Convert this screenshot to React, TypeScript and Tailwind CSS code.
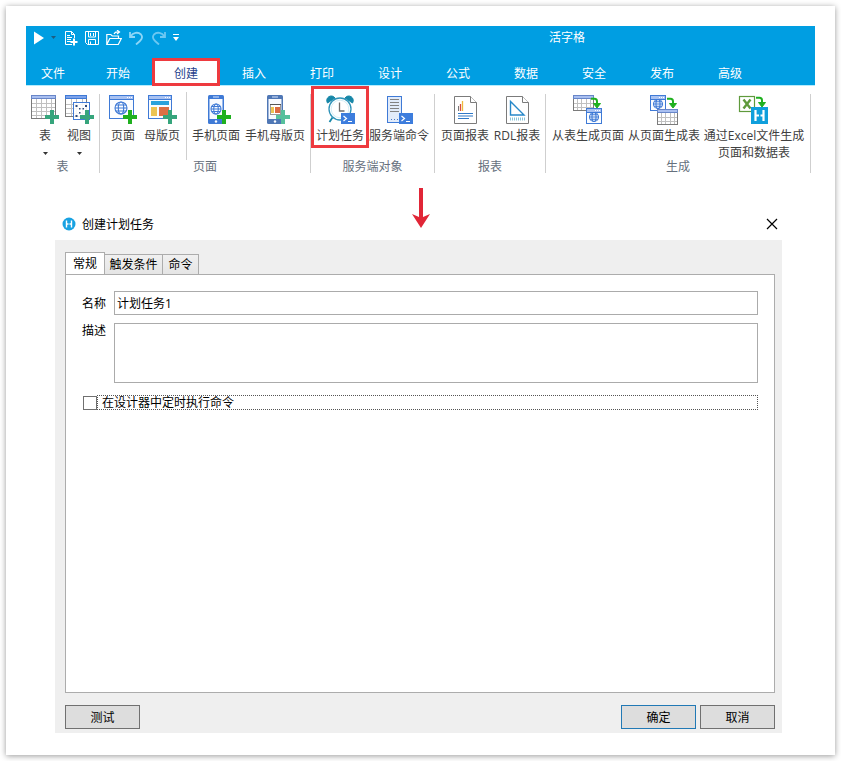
import { useState, type ReactNode } from 'react';

const GREEN = '#1fb01f';
const TEAL = '#36a57c';
const MINT = '#57c09c';
const BLUE = '#3f7ad6';

function Icon({ children }: { children: ReactNode }) {
  return (
    <svg viewBox="0 0 32 32" className="size-8 shrink-0" fill="none" aria-hidden="true">
      {children}
    </svg>
  );
}

function Plus({ x, y = 16, color }: { x: number; y?: number; color: string }) {
  return (
    <path
      d={`M${x + 5} ${y}h4v5h5v4h-5v5h-4v-5h-5v-4h5z`}
      fill={color}
    />
  );
}

function Globe({ x, y, r }: { x: number; y: number; r: number }) {
  return (
    <g stroke={BLUE} strokeWidth="1.1" fill="none">
      <circle cx={x} cy={y} r={r} />
      <ellipse cx={x} cy={y} rx={r * 0.45} ry={r} />
      <path d={`M${x - r} ${y}h${2 * r}M${x - r * 0.85} ${y - r * 0.5}h${r * 1.7}M${x - r * 0.85} ${y + r * 0.5}h${r * 1.7}`} />
    </g>
  );
}

function Sheet({ x, y, w, h, cols, rows }: { x: number; y: number; w: number; h: number; cols: number; rows: number }) {
  const body = h - 4;
  const lines: string[] = [];
  for (let i = 1; i < cols; i++) lines.push(`M${Math.round(x + (w * i) / cols) + 0.5} ${y + 4}v${body}`);
  for (let i = 1; i < rows; i++) lines.push(`M${x} ${Math.round(y + 4 + (body * i) / rows) + 0.5}h${w}`);
  return (
    <g>
      <rect x={x + 0.5} y={y + 0.5} width={w - 1} height={h - 1} fill="#fff" stroke="#7b7b7b" />
      <path d={lines.join('')} stroke="#c0c0c0" />
      <rect x={x + 0.5} y={y + 0.5} width={w - 1} height="3" fill="#a9bff0" stroke="#6886c8" />
      <path d={`M${x + 0.5} ${y + 4}v${body}M${x + w - 0.5} ${y + 4}v${body}M${x} ${y + h - 0.5}h${w}`} stroke="#7b7b7b" />
    </g>
  );
}

function BrowserFrame({ x, y, w, h }: { x: number; y: number; w: number; h: number }) {
  return (
    <g>
      <rect x={x + 0.5} y={y + 0.5} width={w - 1} height={h - 1} fill="#fbfdff" stroke={BLUE} />
      <rect x={x + 1} y={y + 1} width={w - 2} height="3" fill="#a9c2f2" />
      <path d={`M${x} ${y + 4.5}h${w}`} stroke={BLUE} />
      <path d={`M${x + w - 7} ${y + 2.5}h5`} stroke="#fff" strokeDasharray="1 1" />
    </g>
  );
}

function Phone({ color }: { color: string }) {
  return (
    <g>
      <rect x="8" y="1" width="16" height="29" rx="1.5" fill={color} />
      <rect x="9.5" y="5" width="13" height="20" fill="#f7faff" />
      <path d="M13 3h6" stroke="#dce8ff" />
      <circle cx="16" cy="27.5" r="1.2" fill="#fff" />
    </g>
  );
}

function Terminal({ x, y }: { x: number; y: number }) {
  return (
    <g>
      <rect x={x} y={y} width="14" height="11" fill="#3d7ddd" />
      <path d={`M${x + 2.5} ${y + 3}l3 2.5l-3 2.5M${x + 7} ${y + 8.5}h4`} stroke="#fff" strokeWidth="1.2" />
    </g>
  );
}

function TurnArrow({ x, y }: { x: number; y: number }) {
  return (
    <g>
      <path d={`M${x} ${y + 0.8}h3.5q2.5 0 2.5 2.5v4`} stroke={GREEN} strokeWidth="2" />
      <path d={`M${x + 2.5} ${y + 5.5}l3.5 4.5l3.5 -4.5z`} fill={GREEN} stroke={GREEN} />
    </g>
  );
}

function PaperOutline() {
  return (
    <g stroke="#7b7b7b" fill="#fff">
      <path d="M5.5 2.5h16l6 6v21h-22z" />
      <path d="M21.5 2.5v6h6" />
    </g>
  );
}

const tableIcon = (
  <Icon>
    <Sheet x={2} y={1} w={25} h={24} cols={5} rows={5} />
    <Plus x={16} color={TEAL} />
  </Icon>
);

const viewIcon = (
  <Icon>
    <Sheet x={2} y={1} w={22} h={22} cols={4} rows={4} />
    <rect x="2.5" y="1.5" width="21" height="3" fill="#7ea3ea" stroke={BLUE} />
    <rect x="10.5" y="8.5" width="16" height="17" fill="#fff" fillOpacity="0.85" stroke={BLUE} />
    <path d="M12.5 11h2v2h-2zM22 11h2v2h-2zM16 14h1.5v1.5h-1.5zM19.5 14h1.5v1.5h-1.5zM12.5 21h2v2h-2zM16 18h1.5v1.5h-1.5z" fill="#2e4a7c" />
    <Plus x={17} color={TEAL} />
  </Icon>
);

const pageIcon = (
  <Icon>
    <BrowserFrame x={2} y={1} w={25} h={24} />
    <Globe x={14} y={14} r={6} />
    <Plus x={16} color={GREEN} />
  </Icon>
);

const masterIcon = (
  <Icon>
    <BrowserFrame x={2} y={1} w={24} h={24} />
    <rect x="5" y="7" width="18" height="4" fill="#2ba3dc" />
    <rect x="5" y="13" width="6" height="9" fill="#ecc453" />
    <rect x="13" y="13" width="10" height="9" fill="#dc7046" />
    <Plus x={17} color={TEAL} />
  </Icon>
);

const phonePageIcon = (
  <Icon>
    <Phone color={BLUE} />
    <Globe x={16} y={15} r={5} />
    <Plus x={17} color={GREEN} />
  </Icon>
);

const phoneMasterIcon = (
  <Icon>
    <Phone color="#4f77b5" />
    <rect x="11.5" y="10.5" width="10" height="10" fill="#fff" stroke="#9a9a9a" />
    <path d="M11 10.5h11" stroke="#555" />
    <rect x="12" y="13" width="3" height="6" fill="#ecc453" />
    <rect x="16" y="13" width="5" height="6" fill="#dc6a42" />
    <Plus x={17} color={MINT} />
  </Icon>
);

const clockIcon = (
  <Icon>
    <path d="M3.5 9a4.5 4.5 0 0 1 7.5 -5zM28.5 9a4.5 4.5 0 0 0 -7.5 -5z" fill="#1787a8" stroke="#1787a8" />
    <path d="M8.5 23.5l-3 4.5" stroke="#1787a8" strokeWidth="1.8" />
    <circle cx="16" cy="15" r="11" fill="#fff" stroke="#2f93b8" strokeWidth="1.3" />
    <circle cx="16" cy="15" r="8.8" stroke="#d5edf6" />
    <path d="M15.5 8.5v8.5h5" stroke="#6e6e6e" strokeWidth="1.3" />
    <Terminal x={17} y={19} />
  </Icon>
);

const serverIcon = (
  <Icon>
    <rect x="4.5" y="2.5" width="14" height="26" fill="#e1ebfa" stroke={BLUE} />
    <path d="M7 5.5h9M7 8.5h9M7 11.5h9M7 14.5h9M7 17.5h9" stroke="#828282" />
    <path d="M8 25.5h7" stroke="#4877c4" strokeDasharray="1 2" />
    <Terminal x={16} y={19} />
  </Icon>
);

const pageReportIcon = (
  <Icon>
    <PaperOutline />
    <path d="M9.5 12v5" stroke="#777" />
    <path d="M11.5 10v7" stroke="#d94a3d" strokeWidth="1.3" />
    <path d="M13.5 7v10" stroke="#efb93c" strokeWidth="1.3" />
    <path d="M9 19.5h15M9 22h15M9 24.5h11" stroke="#2e78c8" strokeWidth="1.2" />
  </Icon>
);

const rdlIcon = (
  <Icon>
    <PaperOutline />
    <path d="M9.5 7.5v13.5h13.5z" stroke="#2788c9" strokeWidth="1.4" />
    <path d="M9 25h15" stroke="#8ac5da" strokeWidth="3" strokeDasharray="1 1" />
  </Icon>
);

const tableToPageIcon = (
  <Icon>
    <Sheet x={1} y={1} w={21} h={16} cols={5} rows={3} />
    <TurnArrow x={19} y={4} />
    <BrowserFrame x={14} y={14} w={16} h={16} />
    <Globe x={22} y={23} r={4.5} />
  </Icon>
);

const pageToTableIcon = (
  <Icon>
    <BrowserFrame x={2} y={1} w={16} h={16} />
    <Globe x={10} y={10} r={4.5} />
    <TurnArrow x={19} y={4} />
    <Sheet x={9} y={15} w={21} h={16} cols={5} rows={3} />
  </Icon>
);

const excelIcon = (
  <Icon>
    <rect x="1.5" y="2.5" width="15" height="15" fill="#fff" stroke="#5f9a3c" strokeWidth="1.2" />
    <path d="M5.5 5.5l7 9M12.5 5.5l-7 9" stroke="#5f9a3c" strokeWidth="2.4" />
    <TurnArrow x={18} y={3} />
    <rect x="13" y="13" width="17" height="17" fill="#0f9fdc" />
    <path d="M17.5 16v11M25.5 16v11M17.5 21.5h3.5M22.5 21.5h3" stroke="#fff" strokeWidth="2.2" />
  </Icon>
);

const tabs = ['开始', '创建', '插入', '打印', '设计', '公式', '数据', '安全', '发布', '高级'];

function ToolButton({ icon, label, width, menu, marked }: { icon: ReactNode; label: ReactNode; width: string; menu?: boolean; marked?: boolean }) {
  return (
    <button type="button" className={`relative flex flex-col items-center pt-2 ${width}`}>
      {icon}
      <span className="mt-px text-center leading-[17px] whitespace-nowrap">{label}</span>
      {menu && (
        <svg viewBox="0 0 5 3" className="mt-2 h-[3px] w-[5px]" aria-hidden="true">
          <path d="M0 0h5L2.5 3z" fill="#333" />
        </svg>
      )}
      {marked && <span className="absolute inset-x-0 top-0 h-[62px] border-3 border-[#ee3a3f]" />}
    </button>
  );
}

function Group({ name, children }: { name: string; children: ReactNode }) {
  return (
    <section className="relative flex flex-col justify-between pr-px pb-0.5" aria-label={name}>
      <div className="flex items-start">{children}</div>
      <div className="text-center leading-3 text-[#66707d]">{name}</div>
      <span className="absolute top-2 right-0 bottom-0.5 w-px bg-[#cfcfcf]" />
    </section>
  );
}

function QuickAccess() {
  return (
    <div className="flex items-center gap-[7px] pl-2">
      <button type="button" aria-label="运行" className="flex items-center gap-[7px]">
        <svg viewBox="0 0 10 14" className="h-3.5 w-2.5"><path d="M0 0.5v13l10-6.5z" fill="#fff" /></svg>
        <svg viewBox="0 0 6 3" className="h-[3px] w-1.5"><path d="M0 0h5L2.5 3z" fill="#1d5c80" /></svg>
      </button>
      <button type="button" aria-label="新建">
        <svg viewBox="0 0 14 16" className="h-4 w-3.5" fill="none" stroke="#fff">
          <path d="M8 14.5H1.5v-13h6l3 3V8M7.5 1.5v3h3M3 5.5h3M3 7.5h5M3 9.5h4M3 11.5h4" />
          <path d="M10 8.5v7M6.5 12h7" strokeWidth="2" />
        </svg>
      </button>
      <button type="button" aria-label="保存">
        <svg viewBox="0 0 14 14" className="size-3.5" fill="none" stroke="#fff">
          <path d="M0.5 0.5h13v13h-11l-2-2zM3.5 1v5h7V1M3.5 13.5V8.5h7v5M5.5 2v3M8.5 2v3M5.5 10.5v3" />
        </svg>
      </button>
      <button type="button" aria-label="打开">
        <svg viewBox="0 0 16 16" className="size-4" fill="none" stroke="#fff" strokeWidth="1.2">
          <path d="M0.8 14.5V4.5h4l1.5 1.5h6.2v2.5M0.8 14.5l3-6h11.5l-3 6zM8 4q1-2.5 5-2M11 0l2.5 2l-2.5 2" />
        </svg>
      </button>
      <button type="button" aria-label="撤销">
        <svg viewBox="0 0 15 14" className="h-3.5 w-[15px]" fill="none" stroke="#8dd6f7" strokeWidth="1.8">
          <path d="M1 1v5h5M1.5 5.5C4 1.5 9 0.5 12 3.5C15 7 11 10 7 13.5" />
        </svg>
      </button>
      <button type="button" aria-label="重做">
        <svg viewBox="0 0 15 14" className="h-3.5 w-[15px]" fill="none" stroke="#6cc8f2" strokeWidth="1.8">
          <path d="M14 1v5H9M13.5 5.5C11 1.5 6 0.5 3 3.5C0 7 4 10 8 13.5" />
        </svg>
      </button>
      <button type="button" aria-label="自定义快速访问工具栏">
        <svg viewBox="0 0 6 7" className="h-[7px] w-1.5" fill="#fff"><path d="M0 0h6v1H0zM0 3h6L3 7z" /></svg>
      </button>
    </div>
  );
}

function Ribbon() {
  return (
    <>
      <header className="border-b border-[#b5ecfd] bg-[#009ee2] text-white">
        <div className="flex h-8 items-start">
          <div className="flex h-[23px]"><QuickAccess /></div>
          <h1 className="flex-1 pl-35 text-center leading-[23px]">活字格</h1>
        </div>
        <nav className="flex h-[27px]">
          <button type="button" className="mr-1 w-[54px] pt-1">文件</button>
          {tabs.map((tab) => (
            <button
              key={tab}
              type="button"
              className={
                tab === '创建'
                  ? 'h-7 w-[68px] border-3 border-[#ee3a3f] bg-white pt-1 text-[#263f8c]'
                  : 'w-[68px] pt-1'
              }
            >
              {tab}
            </button>
          ))}
        </nav>
      </header>
      <div className="flex h-[89px] text-[#404040]">
        <Group name="表">
          <div className="flex pr-[3px] pl-0.5">
            <ToolButton icon={tableIcon} label="表" width="w-[34px]" menu />
            <ToolButton icon={viewIcon} label="视图" width="w-[34px]" menu />
          </div>
        </Group>
        <Group name="页面">
          <div className="flex pl-1">
            <ToolButton icon={pageIcon} label="页面" width="w-[38px]" />
            <ToolButton icon={masterIcon} label="母版页" width="w-[40px]" />
            <span className="ml-1 mt-1.5 h-[68px] w-px bg-[#cfcfcf]" />
            <ToolButton icon={phonePageIcon} label="手机页面" width="w-[58px]" />
            <ToolButton icon={phoneMasterIcon} label="手机母版页" width="w-[60px]" />
            <span className="w-[5px]" />
          </div>
        </Group>
        <Group name="服务端对象">
          <ToolButton icon={clockIcon} label="计划任务" width="w-[58px]" marked />
          <div className="pr-[5px]">
            <ToolButton icon={serverIcon} label="服务端命令" width="w-[60px]" />
          </div>
        </Group>
        <Group name="报表">
          <div className="flex pl-1.5">
            <ToolButton icon={pageReportIcon} label="页面报表" width="w-[48px]" />
            <ToolButton icon={rdlIcon} label="RDL报表" width="w-[56px]" />
          </div>
        </Group>
        <Group name="生成">
          <div className="flex px-1.5">
            <ToolButton icon={tableToPageIcon} label="从表生成页面" width="w-[72px]" />
            <ToolButton icon={pageToTableIcon} label="从页面生成表" width="w-[80px]" />
            <ToolButton icon={excelIcon} label={<>通过Excel文件生成<br />页面和数据表</>} width="w-[100px]" />
          </div>
        </Group>
      </div>
    </>
  );
}

function PushButton({ children, primary }: { children: ReactNode; primary?: boolean }) {
  return (
    <button
      type="button"
      className={`h-6 w-[75px] border bg-[#dddddd] pt-0.5 ${primary ? 'border-[#2179b5]' : 'border-[#707070]'}`}
    >
      {children}
    </button>
  );
}

function TaskDialog() {
  const [name, setName] = useState('计划任务1');
  const tab = 'h-5 border border-b-0 border-l-0 border-[#acacac] bg-linear-to-b from-[#f0f0f0] to-[#e5e5e5]';
  return (
    <section className="mr-[33px] ml-[29px] flex flex-1 flex-col text-black" aria-labelledby="dialog-title">
      <div className="flex h-8 items-center pr-[3px] pl-[7px]">
        <svg viewBox="0 0 14 14" className="size-3.5" aria-hidden="true">
          <circle cx="7" cy="7" r="6.5" fill="#18a2e2" />
          <path d="M4.5 3.5v7M9.5 3.5v7M4.5 7h2M7.5 7h2" stroke="#fff" strokeWidth="1.4" />
        </svg>
        <h2 id="dialog-title" className="ml-1.5 flex-1 pt-0.5">创建计划任务</h2>
        <button type="button" aria-label="关闭" className="p-px">
          <svg viewBox="0 0 12 12" className="size-3" stroke="#000" strokeWidth="1.2">
            <path d="M1 1l10 10M11 1L1 11" />
          </svg>
        </button>
      </div>
      <div className="flex flex-1 flex-col bg-[#efefef] pt-3 pr-[7px] pb-1 pl-2.5">
        <div className="flex items-end" role="tablist">
          <button type="button" role="tab" aria-selected="true" className="-mb-px h-[23px] w-10 border border-b-0 border-[#acacac] bg-white">常规</button>
          <button type="button" role="tab" aria-selected="false" className={`w-[58px] ${tab}`}>触发条件</button>
          <button type="button" role="tab" aria-selected="false" className={`w-9 ${tab}`}>命令</button>
        </div>
        <form className="flex flex-1 flex-col gap-2 border border-[#acacac] bg-white p-4">
          <div className="flex items-center">
            <label htmlFor="task-name" className="w-8 pt-0.5">名称</label>
            <input id="task-name" value={name} onChange={(e) => setName(e.target.value)} className="h-6 min-w-0 flex-1 border border-[#ababab] px-0.5 outline-none" />
          </div>
          <div className="flex items-start">
            <label htmlFor="task-description" className="w-8 leading-4">描述</label>
            <textarea id="task-description" className="h-[60px] min-w-0 flex-1 resize-none border border-[#ababab] px-0.5 outline-none" />
          </div>
          <div className="mt-1 flex items-center pl-px">
            <input id="run-in-designer" type="checkbox" className="size-3.5 appearance-none border border-[#707070] bg-white checked:bg-[#2179b5]" />
            <label htmlFor="run-in-designer" className="flex h-[15px] flex-1 items-center border border-dotted border-[#555555] pl-1">在设计器中定时执行命令</label>
          </div>
        </form>
        <div className="mt-3 flex gap-1">
          <PushButton>测试</PushButton>
          <span className="flex-1" />
          <PushButton primary>确定</PushButton>
          <PushButton>取消</PushButton>
        </div>
      </div>
    </section>
  );
}

export default function App() {
  return (
    <div className="flex min-h-screen bg-white p-1.5 font-['Open_Sans','Noto_Sans_CJK_SC',sans-serif] text-xs">
      <main className="flex flex-1 flex-col bg-white px-5 pt-5 pb-[22px] shadow-[0_1px_6px_rgba(0,0,0,0.4)]">
        <Ribbon />
        <div className="relative flex flex-1 flex-col pt-[33px]">
          <TaskDialog />
          <svg viewBox="0 0 18 40" className="absolute top-[13px] left-1/2 h-10 w-[18px] -translate-x-1/2" fill="#e12637" aria-hidden="true">
            <path d="M7 0h4v29l7-3l-9 14l-9-14l7 3z" />
          </svg>
        </div>
      </main>
    </div>
  );
}
